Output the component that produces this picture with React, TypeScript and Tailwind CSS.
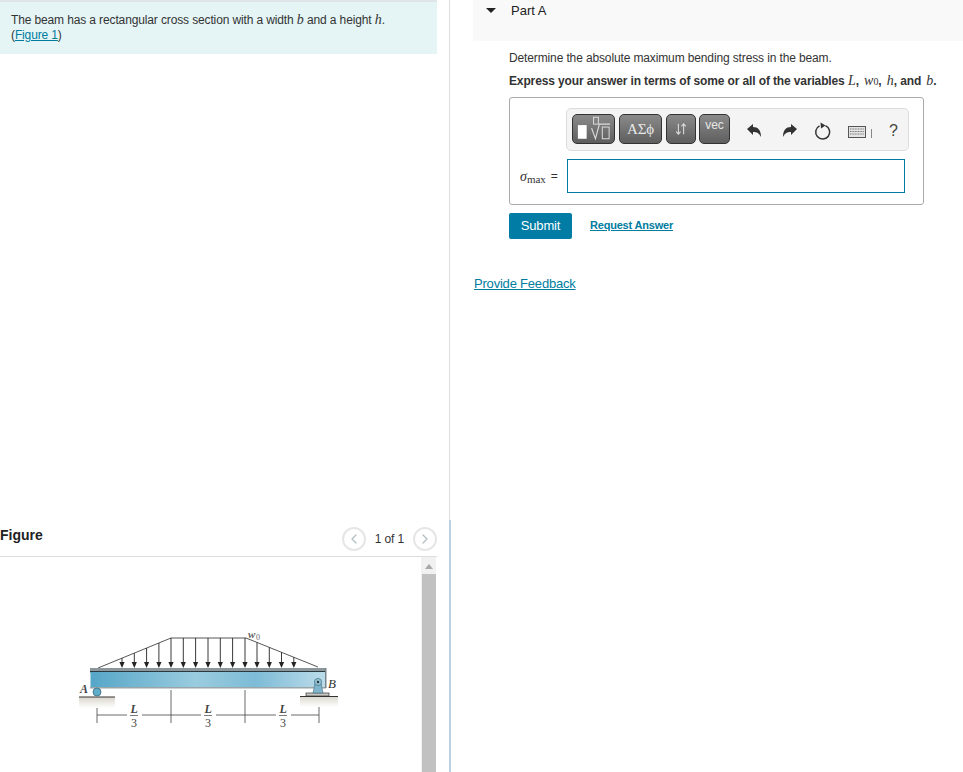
import { ChevronLeft, ChevronRight } from 'lucide-react';

const ARROWS = [122, 134.3, 146.6, 158.9, 171, 183.3, 195.6, 208, 220.3, 232.6, 245, 257, 269.3, 281.5, 293.8];

function loadTop(x: number) {
  if (x < 171) return 668 - ((x - 98) / 73) * 30;
  if (x <= 246) return 638;
  return 638 + ((x - 246) / 72) * 29;
}

function BeamDiagram() {
  return (
    <svg viewBox="70 620 280 115" className="w-[280px] h-[115px] block">
      <defs>
        <linearGradient id="beam" x1="0" y1="0" x2="1" y2="0">
          <stop offset="0" stopColor="#56a6c8" />
          <stop offset="0.45" stopColor="#9accdf" />
          <stop offset="0.7" stopColor="#7dbbd6" />
          <stop offset="1" stopColor="#bcdcea" />
        </linearGradient>
        <linearGradient id="ground" x1="0" y1="0" x2="0" y2="1">
          <stop offset="0" stopColor="#d8d6cc" />
          <stop offset="1" stopColor="#ffffff" />
        </linearGradient>
      </defs>
      <polyline points="98,668 171,638 246,638 318,667" fill="none" stroke="#444" strokeWidth="0.9" />
      {ARROWS.map((x) => (
        <g key={x}>
          <line x1={x} y1={loadTop(x)} x2={x} y2={664} stroke="#222" strokeWidth="0.9" />
          <polygon points={`${x - 2.6},662 ${x + 2.6},662 ${x},668`} fill="#222" />
        </g>
      ))}
      <rect x="90" y="668" width="236" height="4" fill="#8c979c" />
      <rect x="90" y="671" width="236" height="1.5" fill="#2b3a40" />
      <rect x="90.5" y="672" width="235" height="15" fill="url(#beam)" />
      <rect x="90" y="687" width="236" height="1.5" fill="#9aa5aa" />
      <rect x="325" y="668" width="1.5" height="20" fill="#77858b" />

      <rect x="79" y="697" width="36" height="11" fill="url(#ground)" />
      <line x1="79" y1="697" x2="115" y2="697" stroke="#333" strokeWidth="1" />
      <circle cx="97" cy="692" r="4" fill="#5eadc9" stroke="#3b6b7e" strokeWidth="0.8" />
      <text x="80" y="693" fontFamily="'Liberation Serif', serif" fontStyle="italic" fontWeight="700" fontSize="12" fill="#444">A</text>

      <rect x="300" y="696" width="38" height="11" fill="url(#ground)" />
      <line x1="300" y1="696.5" x2="338" y2="696.5" stroke="#333" strokeWidth="1" />
      <rect x="306" y="693" width="23" height="3" fill="#c9c9c4" stroke="#333" strokeWidth="0.7" />
      <polygon points="313,693 315,683 321,683 323,693" fill="#7fb5cd" stroke="#48707f" strokeWidth="0.6" />
      <circle cx="318" cy="682" r="3.6" fill="#8fc1d6" stroke="#48707f" strokeWidth="0.7" />
      <circle cx="318" cy="682" r="1.2" fill="#333" />
      <text x="328" y="688" fontFamily="'Liberation Serif', serif" fontStyle="italic" fontSize="13" fill="#333">B</text>

      <text x="248" y="638" fontFamily="'Liberation Serif', serif" fontStyle="italic" fontWeight="700" fontSize="11" fill="#666">w</text>
      <text x="256" y="640" fontFamily="'Liberation Serif', serif" fontSize="8" fill="#666">0</text>

      <g stroke="#444" strokeWidth="0.8">
        <line x1="97" y1="708" x2="97" y2="723" />
        <line x1="171" y1="690" x2="171" y2="723" />
        <line x1="245" y1="690" x2="245" y2="723" />
        <line x1="319" y1="707" x2="319" y2="723" />
        <line x1="97" y1="715" x2="127" y2="715" />
        <line x1="142" y1="715" x2="171" y2="715" />
        <line x1="171" y1="715" x2="201" y2="715" />
        <line x1="216" y1="715" x2="245" y2="715" />
        <line x1="245" y1="715" x2="276" y2="715" />
        <line x1="291" y1="715" x2="319" y2="715" />
      </g>
      {[134, 208, 283].map((x) => (
        <g key={x} fontFamily="'Liberation Serif', serif" fontSize="12" fill="#444" textAnchor="middle">
          <text x={x} y="713" fontStyle="italic" fontWeight="700">L</text>
          <line x1={x - 4} y1="715.5" x2={x + 4} y2="715.5" stroke="#444" strokeWidth="0.7" />
          <text x={x} y="727">3</text>
        </g>
      ))}
    </svg>
  );
}

function Mi({ children, className = '' }: { children: React.ReactNode; className?: string }) {
  return <span className={`font-['Liberation_Serif',serif] italic text-[14px] leading-none font-normal tracking-normal ${className}`}>{children}</span>;
}

function ToolButton({ className, children }: { className: string; children: React.ReactNode }) {
  return (
    <div className={`h-[30px] flex items-center justify-center rounded-[5px] border border-[#333] bg-gradient-to-b from-[#8a8a8a] to-[#5f5f5f] text-[#e8e8e8] ${className}`}>
      {children}
    </div>
  );
}

function Toolbar() {
  return (
    <div className="ml-auto h-[43px] w-[343px] flex items-center pl-[5px] rounded-[5px] border border-[#dcdcdc] bg-[#f4f4f4]">
      <div className="flex -mt-[1px]">
        <ToolButton className="w-[43px]">
          <svg viewBox="0 0 42 28" className="w-[41px] h-[28px]">
            <rect x="5" y="10" width="9" height="14" fill="#fff" />
            <rect x="21" y="2" width="5" height="7" fill="none" stroke="#ddd" strokeWidth="1" />
            <path d="M19 13 L23 24 L27 9 H38" fill="none" stroke="#ddd" strokeWidth="1.1" />
            <rect x="30" y="12" width="7" height="12" fill="none" stroke="#ddd" strokeWidth="1" />
          </svg>
        </ToolButton>
        <ToolButton className="ml-[4px] w-[43px] font-['Liberation_Serif',serif] text-[15px]">ΑΣϕ</ToolButton>
        <ToolButton className="ml-[4px] w-[30px]">
          <svg viewBox="0 0 16 16" className="w-[14px] h-[14px]" fill="none" stroke="#ddd" strokeWidth="1.2">
            <path d="M5 2 V14 M2.5 11 L5 14 L7.5 11" />
            <path d="M11 14 V2 M8.5 5 L11 2 L13.5 5" />
          </svg>
        </ToolButton>
        <ToolButton className="ml-[3px] w-[31px] !items-start pt-[3px] text-[12px] leading-[14px] font-['Liberation_Sans',sans-serif]">vec</ToolButton>
      </div>
      <svg viewBox="0 0 18 16" className="ml-[16px] mt-[3px] w-[18px] h-[16px]" fill="#333">
        <path d="M1 6 L7 1 V4 C12 4 15 7 15 14 C13 10 11 9 7 9 V12 Z" />
      </svg>
      <svg viewBox="0 0 18 16" className="ml-[16px] mt-[3px] w-[18px] h-[16px]" fill="#333">
        <path d="M17 6 L11 1 V4 C6 4 3 7 3 14 C5 10 7 9 11 9 V12 Z" />
      </svg>
      <svg viewBox="0 0 18 18" className="ml-[16px] mt-[3px] w-[18px] h-[18px]" fill="none" stroke="#333" strokeWidth="1.5">
        <path d="M11.5 3.6 A7 7 0 1 1 5.5 3.8" />
        <polygon points="6.5,0.5 11.5,3.5 7,6.5" fill="#333" stroke="none" />
      </svg>
      <svg viewBox="0 0 18 12" className="ml-[16px] w-[18px] h-[12px] mt-[5px]">
        <rect x="0.5" y="0.5" width="17" height="11" fill="#e4e4e4" stroke="#555" />
        <path d="M2 3 H16 M2 5.5 H16 M2 8 H16" stroke="#777" strokeWidth="1.2" strokeDasharray="1 0.6" />
      </svg>
      <div className="ml-[5px] w-px h-[9px] mt-[7px] bg-[#888]" />
      <span className="ml-[17px] mt-[3px] text-[16px] text-[#444] font-['Liberation_Sans',sans-serif]">?</span>
    </div>
  );
}

export default function App() {
  return (
    <div className="w-[963px] h-[772px] overflow-hidden flex bg-white text-[12px] tracking-[-0.13px] text-[#333] font-['Liberation_Sans',Arial,sans-serif]">
      <div className="w-[449px] flex flex-col">
        <div className="w-[437px] h-[54px] border-t-2 border-[#dfe5e6] bg-[#e5f5f6] pl-[11px] pt-[11px] leading-[15px]">
          <div>
            The beam has a rectangular cross section with a width <Mi>b</Mi> and a height <Mi>h</Mi>.
          </div>
          <div>
            (<span className="text-[#007c9f] underline">Figure 1</span>)
          </div>
        </div>

        <div className="mt-[471px] w-[437px] h-[32px] flex items-start border-b border-[#dddddd]">
          <span className="text-[14px] leading-[20px] font-bold tracking-normal text-[#222]">Figure</span>
          <div className="ml-auto flex items-center mt-[2px]">
            <div className="w-[24px] h-[24px] rounded-full border-2 border-[#e6e6e6] flex items-center justify-center">
              <ChevronLeft size={16} className="text-[#b5c0c6]" />
            </div>
            <span className="ml-[9px] mr-[9px] text-[#333]">1 of 1</span>
            <div className="w-[24px] h-[24px] rounded-full border-2 border-[#e6e6e6] flex items-center justify-center">
              <ChevronRight size={16} className="text-[#b5c0c6]" />
            </div>
          </div>
        </div>

        <div className="w-[437px] flex-1 flex">
          <div className="w-[421px] pt-[63px] pl-[70px]">
            <BeamDiagram />
          </div>
          <div className="w-[15px] bg-[#f1f1f1] flex flex-col items-center">
            <div className="mt-[7px] w-0 h-0 border-x-[4px] border-x-transparent border-b-[5px] border-b-[#a8a8a8]" />
            <div className="mt-[5px] w-[14px] flex-1 bg-[#c1c1c1]" />
          </div>
        </div>
      </div>

      <div className="w-[2px] flex flex-col shrink-0">
        <div className="h-[520px] w-px bg-[#dddddd]" />
        <div className="flex-1 bg-[#bcd0e2]" />
      </div>

      <div className="flex-1 pl-[22px]">
        <div className="h-[41px] bg-[#f9f9f9] flex items-start">
          <div className="ml-[13px] mt-[8px] w-0 h-0 border-x-[5px] border-x-transparent border-t-[5px] border-t-[#222]" />
          <span className="ml-[15px] mt-[3px] text-[13px] leading-[16px] tracking-normal text-[#222]">Part A</span>
        </div>

        <div className="pl-[36px]">
          <p className="mt-[10px] leading-[15px]">Determine the absolute maximum bending stress in the beam.</p>
          <p className="mt-[8px] h-[16px] leading-[14px] font-bold">
            Express your answer in terms of some or all of the variables <Mi>L</Mi>, <Mi className="ml-[2px]">w</Mi>
            <span className="font-['Liberation_Serif',serif] text-[10px] leading-none font-normal">0</span>, <Mi className="ml-[2px]">h</Mi>, and <Mi className="ml-[2px]">b</Mi>.
          </p>

          <div className="mt-[7px] w-[415px] h-[108px] rounded-[3px] border border-[#aaaaaa] pt-[10px] pr-[14px]">
            <Toolbar />
            <div className="mt-[8px] flex items-center">
              <span className="ml-[10px] font-['Liberation_Serif',serif] text-[14px] tracking-normal">
                <i>σ</i>
                <span className="text-[11px] relative top-[2px]">max</span>
              </span>
              <span className="ml-[5px] text-[12px]">=</span>
              <div className="ml-[9px] w-[338px] h-[34px] border border-[#007c9f] bg-white" />
            </div>
          </div>

          <div className="mt-[8px] flex items-start">
            <div className="w-[63px] h-[26px] rounded-[2px] bg-[#007ca5] text-white text-[13px] flex items-center justify-center">Submit</div>
            <span className="ml-[18px] mt-[5px] text-[11px] leading-[15px] font-bold text-[#007c9f] underline tracking-[-0.2px]">Request Answer</span>
          </div>
        </div>

        <div className="ml-[1px] mt-[36px] text-[13px] leading-[17px] text-[#007c9f] underline tracking-[-0.2px]">Provide Feedback</div>
      </div>
    </div>
  );
}
